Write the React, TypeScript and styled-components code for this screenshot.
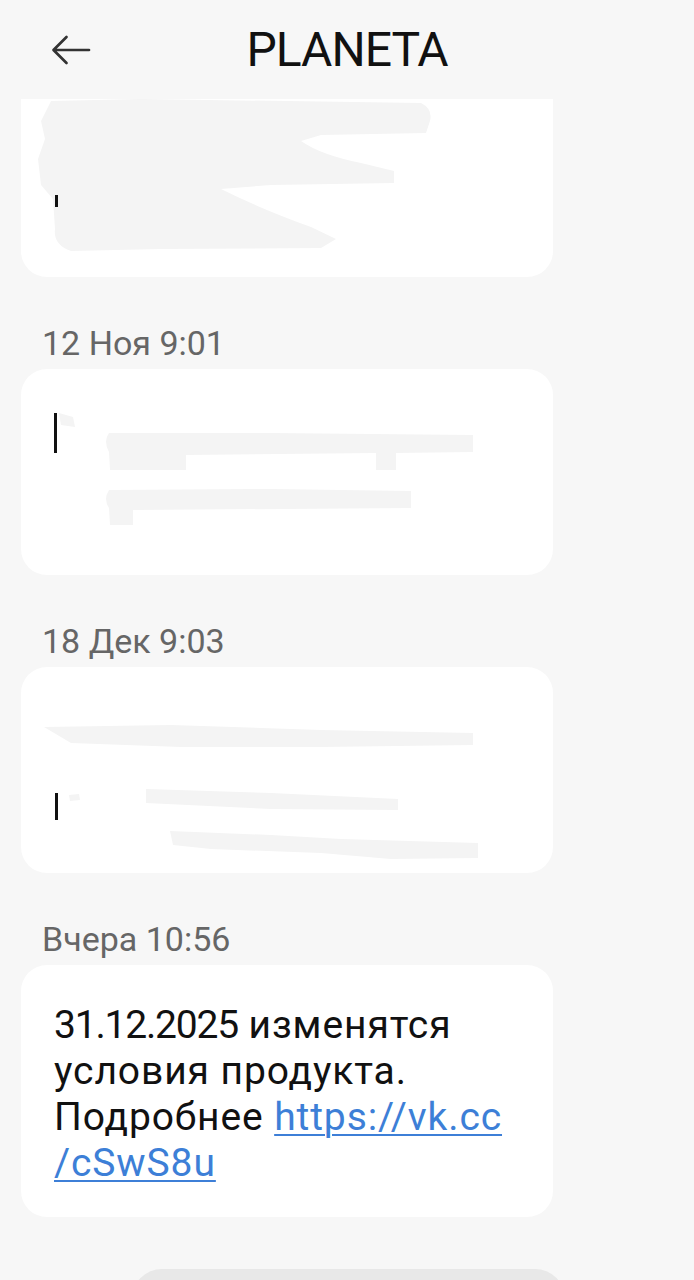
import React from "react";
import styled, { createGlobalStyle } from "styled-components";

const Global = createGlobalStyle`
  html, body { margin: 0; padding: 0; background: #f7f7f7; }
  body { font-family: Roboto, "Noto Sans", "Liberation Sans", sans-serif; }
`;

const Page = styled.div`
  width: 694px;
  height: 1280px;
  overflow: hidden;
  background: #f7f7f7;
  display: flex;
  flex-direction: column;
`;

const Header = styled.header`
  height: 99px;
  flex: 0 0 99px;
  display: grid;
  grid-template-columns: 120px 1fr 120px;
  align-items: center;
  background: #f7f7f7;
  position: relative;
  z-index: 1;
`;

const BackButton = styled.button`
  border: 0;
  background: none;
  padding: 0 0 0 51px;
  height: 40px;
  display: flex;
  align-items: center;
  cursor: pointer;
`;

const Title = styled.h1`
  margin: 0;
  text-align: center;
  font-size: 48px;
  font-weight: 400;
  color: #111;
  letter-spacing: -1px;
  line-height: 1;
`;

const Thread = styled.div`
  flex: 1;
  overflow: hidden;
  display: flex;
  flex-direction: column;
  padding: 0 21px;
  & > * { flex-shrink: 0; }
`;

const Bubble = styled.div<{ $h?: number; $cut?: boolean }>`
  width: 532px;
  box-sizing: border-box;
  background: #ffffff;
  border-radius: 26px;
  position: relative;
  overflow: hidden;
  ${(p) => (p.$h ? `height: ${p.$h}px;` : "")}
  ${(p) => (p.$cut ? "margin-top: -40px;" : "")}
`;

const Redacted = styled.svg`
  display: block;
  width: 100%;
  height: 100%;
`;

const Glyph = styled.span<{ $x: number; $y: number; $h: number }>`
  position: absolute;
  left: ${(p) => p.$x}px;
  top: ${(p) => p.$y}px;
  width: 3px;
  height: ${(p) => p.$h}px;
  background: #111;
`;

const DateLabel = styled.div`
  margin: 46px 0 6px;
  padding-left: 21px;
  font-size: 34px;
  line-height: 40px;
  color: #666;
`;

const MessageText = styled.p`
  margin: 0;
  padding: 37px 20px 31px 33px;
  font-size: 39px;
  line-height: 46px;
  color: #111;
  letter-spacing: 0.9px;
`;

const Numeric = styled.span`
  letter-spacing: -1.2px;
`;

const Link = styled.a`
  color: #3d7fd7;
  text-decoration: underline;
  text-decoration-thickness: 2px;
  text-underline-offset: 4px;
`;

const Composer = styled.div`
  margin: 52px 0 0 111px;
  width: 433px;
  height: 60px;
  border-radius: 30px;
  background: #e8e8e8;
`;

const smudge = "#f4f4f4";

export default function App() {
  return (
    <>
      <Global />
      <Page>
        <Header>
          <BackButton aria-label="Назад">
            <svg width="40" height="30" viewBox="0 0 40 30" fill="none">
              <path d="M38 15H3M15.5 2L2.5 15L15.5 28" stroke="#333" strokeWidth="2.7" strokeLinecap="round" strokeLinejoin="round" />
            </svg>
          </BackButton>
          <Title>PLANETA</Title>
          <div />
        </Header>
        <Thread>
          <Bubble $h={218} $cut>
            <Redacted viewBox="0 0 532 218" preserveAspectRatio="none">
              <path fill={smudge} d="M30 42 L120 40 L400 44 Q412 50 409 62 L405 74 L300 76 L280 82 Q300 96 340 104 L373 112 L373 124 L250 126 L200 130 Q240 150 290 168 L315 180 L300 189 L140 190 L50 192 Q32 186 34 170 L32 140 L20 126 L17 100 L24 80 L20 62 Z" />
            </Redacted>
            <Glyph $x={34} $y={136} $h={12} />
          </Bubble>

          <DateLabel>12 Ноя 9:01</DateLabel>
          <Bubble $h={206}>
            <Redacted viewBox="0 0 532 206" preserveAspectRatio="none">
              <path fill={smudge} d="M88 64 Q82 72 88 83 L89 101 L165 101 L165 86 L355 84 L355 101 L375 101 L375 84 L452 83 L452 66 L250 64 Z" />
              <path fill={smudge} d="M88 121 Q82 130 88 139 L89 156 L112 156 L112 141 L390 139 L390 122 L250 120 Z" />
              <path fill={smudge} d="M38 44 L52 48 L54 58 L40 56 Z" />
            </Redacted>
            <Glyph $x={33} $y={44} $h={40} />
          </Bubble>

          <DateLabel>18 Дек 9:03</DateLabel>
          <Bubble $h={206}>
            <Redacted viewBox="0 0 532 206" preserveAspectRatio="none">
              <path fill={smudge} d="M23 60 L150 58 L300 63 L452 66 L452 78 L300 80 L160 80 L50 76 Z" />
              <path fill={smudge} d="M125 122 L250 126 L377 132 L377 143 L250 142 L125 136 Z" />
              <path fill={smudge} d="M149 164 L250 168 L320 172 L457 176 L457 191 L370 192 L300 186 L190 182 L152 178 Z" />
              <path fill={smudge} d="M48 128 L58 127 L59 133 L49 134 Z" />
            </Redacted>
            <Glyph $x={34} $y={126} $h={27} />
          </Bubble>

          <DateLabel>Вчера 10:56</DateLabel>
          <Bubble>
            <MessageText>
              <Numeric>31.12.2025</Numeric> изменятся условия продукта. Подробнее{" "}
              <Link href="#">https://vk.cc<br />/cSwS8u</Link>
            </MessageText>
          </Bubble>

          <Composer />
        </Thread>
      </Page>
    </>
  );
}
